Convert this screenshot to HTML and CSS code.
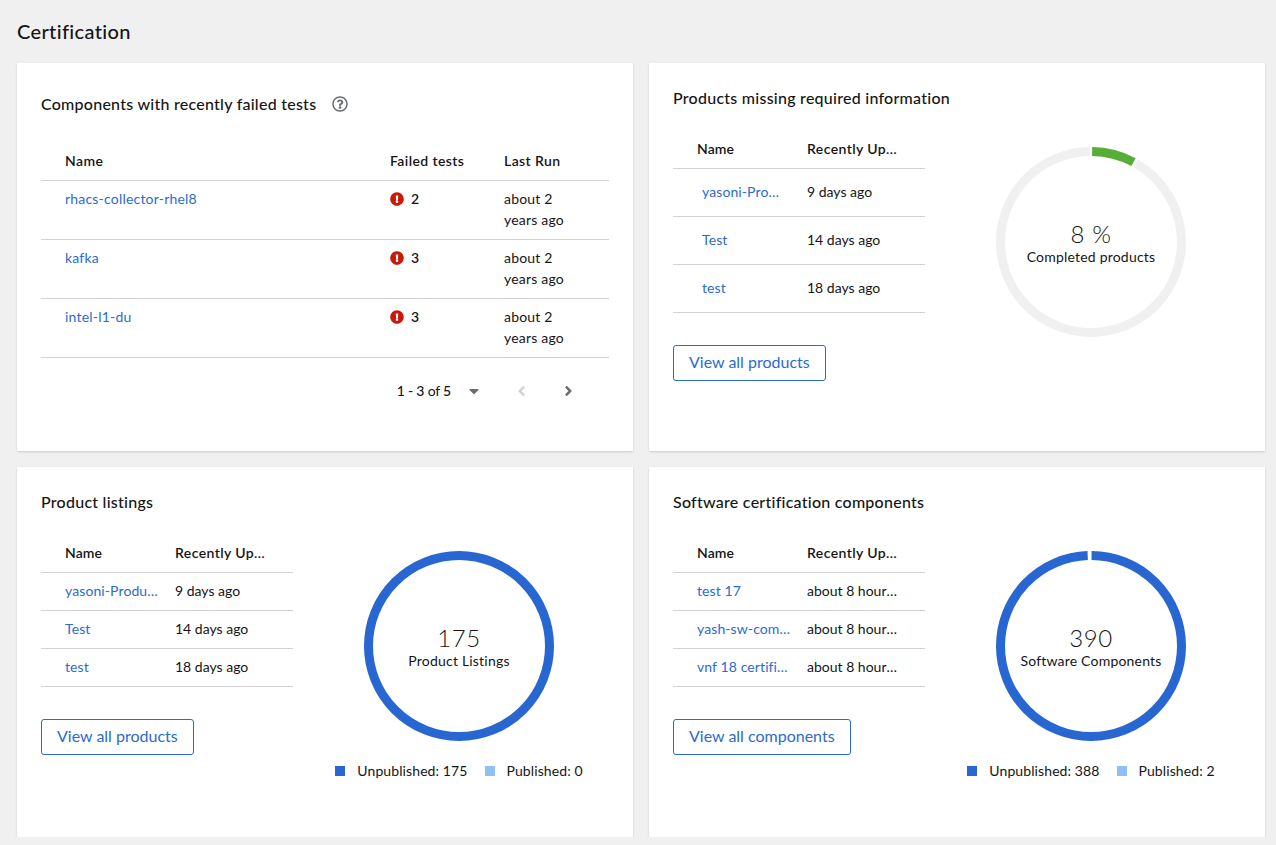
FILE: index.html
```html
<!doctype html>
<html lang="en">
	<head>
		<meta charset="utf-8">
		<title>Certification</title>
		<link rel="stylesheet" href="styles.css">
	</head>
	<body>
	<h1 class="page-title">Certification</h1>
	<div class="grid">

		<!-- failed tests -->
		<section class="card card-tests">
			<div class="card-head">
				<h2>Components with recently failed tests</h2>
				<svg class="help" viewBox="0 0 512 512"><path d="M256 8C119.043 8 8 119.083 8 256c0 136.997 111.043 248 248 248s248-111.003 248-248C504 119.083 392.957 8 256 8zm0 448c-110.532 0-200-89.431-200-200 0-110.495 89.472-200 200-200 110.491 0 200 89.471 200 200 0 110.53-89.431 200-200 200zm107.244-255.2c0 67.052-72.421 68.084-72.421 92.863V300c0 6.627-5.373 12-12 12h-45.647c-6.627 0-12-5.373-12-12v-8.659c0-35.745 27.1-50.034 47.579-61.516 17.561-9.845 28.324-16.541 28.324-29.579 0-17.246-21.999-28.693-39.784-28.693-23.189 0-33.894 10.977-48.942 29.969-4.057 5.12-11.46 6.071-16.666 2.124l-27.824-21.098c-5.107-3.872-6.251-11.066-2.644-16.363C184.846 131.491 214.94 112 261.794 112c49.071 0 101.45 38.304 101.45 88.8zM298 368c0 23.159-18.841 42-42 42s-42-18.841-42-42 18.841-42 42-42 42 18.841 42 42z"/></svg>
			</div>
			<table class="tbl tbl-tests">
				<thead><tr><th class="c-name">Name</th><th class="c-fail">Failed tests</th><th class="c-run">Last Run</th></tr></thead>
				<tbody>
					<tr><td class="c-name"><a href="#">rhacs-collector-rhel8</a></td><td class="c-fail"><svg class="err" viewBox="0 0 512 512"><path d="M504 256c0 136.997-111.043 248-248 248S8 392.997 8 256C8 119.083 119.043 8 256 8s248 111.083 248 248zm-248 50c-25.405 0-46 20.595-46 46s20.595 46 46 46 46-20.595 46-46-20.595-46-46-46zm-43.673-165.346l7.418 136c.347 6.364 5.609 11.346 11.982 11.346h48.546c6.373 0 11.635-4.982 11.982-11.346l7.418-136c.375-6.874-5.098-12.654-11.982-12.654h-63.383c-6.884 0-12.356 5.78-11.981 12.654z"/></svg><b>2</b></td><td class="c-run">about 2 years ago</td></tr>
					<tr><td class="c-name"><a href="#">kafka</a></td><td class="c-fail"><svg class="err" viewBox="0 0 512 512"><path d="M504 256c0 136.997-111.043 248-248 248S8 392.997 8 256C8 119.083 119.043 8 256 8s248 111.083 248 248zm-248 50c-25.405 0-46 20.595-46 46s20.595 46 46 46 46-20.595 46-46-20.595-46-46-46zm-43.673-165.346l7.418 136c.347 6.364 5.609 11.346 11.982 11.346h48.546c6.373 0 11.635-4.982 11.982-11.346l7.418-136c.375-6.874-5.098-12.654-11.982-12.654h-63.383c-6.884 0-12.356 5.78-11.981 12.654z"/></svg><b>3</b></td><td class="c-run">about 2 years ago</td></tr>
					<tr><td class="c-name"><a href="#">intel-l1-du</a></td><td class="c-fail"><svg class="err" viewBox="0 0 512 512"><path d="M504 256c0 136.997-111.043 248-248 248S8 392.997 8 256C8 119.083 119.043 8 256 8s248 111.083 248 248zm-248 50c-25.405 0-46 20.595-46 46s20.595 46 46 46 46-20.595 46-46-20.595-46-46-46zm-43.673-165.346l7.418 136c.347 6.364 5.609 11.346 11.982 11.346h48.546c6.373 0 11.635-4.982 11.982-11.346l7.418-136c.375-6.874-5.098-12.654-11.982-12.654h-63.383c-6.884 0-12.356 5.78-11.981 12.654z"/></svg><b>3</b></td><td class="c-run">about 2 years ago</td></tr>
				</tbody>
			</table>
			<div class="pager">
				<span class="pager-count"><b>1 - 3</b> of <b>5</b></span>
				<svg class="pager-caret" viewBox="0 0 320 512"><path d="M31.3 192h257.3c17.8 0 26.7 21.5 14.1 34.1L174.1 354.8c-7.8 7.8-20.5 7.8-28.3 0L17.2 226.1C4.6 213.5 13.5 192 31.3 192z"/></svg>
				<svg class="pager-arrow off" viewBox="0 0 256 512"><path d="M31.7 239l136-136c9.4-9.4 24.6-9.4 33.9 0l22.6 22.6c9.4 9.4 9.4 24.6 0 33.9L127.9 256l96.4 96.4c9.4 9.4 9.4 24.6 0 33.9L201.7 409c-9.4 9.4-24.6 9.4-33.9 0l-136-136c-9.5-9.4-9.5-24.6-.1-34z"/></svg>
				<svg class="pager-arrow" viewBox="0 0 256 512"><path d="M224.3 273l-136 136c-9.4 9.4-24.6 9.4-33.9 0l-22.6-22.6c-9.4-9.4-9.4-24.6 0-33.9l96.4-96.4-96.4-96.4c-9.4-9.4-9.4-24.6 0-33.9L54.3 103c9.4-9.4 24.6-9.4 33.9 0l136 136c9.5 9.4 9.5 24.6.1 34z"/></svg>
			</div>
		</section>

		<!-- missing info -->
		<section class="card">
			<h2>Products missing required information</h2>
			<div class="split">
				<div class="side">
					<table class="tbl tbl-small tbl-tall">
						<thead><tr><th class="c-a">Name</th><th class="c-b"><span class="cut">Recently Updated</span></th></tr></thead>
						<tbody>
							<tr><td class="c-a"><a class="cut nudge" href="#">yasoni-Product</a></td><td class="c-b"><span class="cut">9 days ago</span></td></tr>
							<tr><td class="c-a"><a class="cut nudge" href="#">Test</a></td><td class="c-b"><span class="cut">14 days ago</span></td></tr>
							<tr><td class="c-a"><a class="cut nudge" href="#">test</a></td><td class="c-b"><span class="cut">18 days ago</span></td></tr>
						</tbody>
					</table>
					<a class="btn" href="#">View all products</a>
				</div>
				<div class="chart">
					<svg class="donut" viewBox="0 0 190 190">
						<circle class="ring ring-grey" cx="95" cy="95" r="90.5" pathLength="100" stroke-dasharray="91.6 8.4" stroke-dashoffset="-8.2"/>
						<circle class="ring ring-green" cx="95" cy="95" r="90.5" pathLength="100" stroke-dasharray="7.6 92.4" stroke-dashoffset="-0.2"/>
						<text class="d-num" x="95" y="96">8 %</text>
						<text class="d-sub" x="95" y="115">Completed products</text>
					</svg>
				</div>
			</div>
		</section>

		<!-- listings -->
		<section class="card">
			<h2>Product listings</h2>
			<div class="split">
				<div class="side">
					<table class="tbl tbl-small">
						<thead><tr><th class="c-a">Name</th><th class="c-b"><span class="cut">Recently Updated</span></th></tr></thead>
						<tbody>
							<tr><td class="c-a"><a class="cut" href="#">yasoni-Product</a></td><td class="c-b"><span class="cut">9 days ago</span></td></tr>
							<tr><td class="c-a"><a class="cut" href="#">Test</a></td><td class="c-b"><span class="cut">14 days ago</span></td></tr>
							<tr><td class="c-a"><a class="cut" href="#">test</a></td><td class="c-b"><span class="cut">18 days ago</span></td></tr>
						</tbody>
					</table>
					<a class="btn" href="#">View all products</a>
				</div>
				<div class="chart">
					<svg class="donut" viewBox="0 0 190 190">
						<circle class="ring ring-blue" cx="95" cy="95" r="90.5"/>
						<text class="d-num" x="95" y="96">175</text>
						<text class="d-sub" x="95" y="115">Product Listings</text>
					</svg>
					<div class="legend">
						<span class="leg"><i class="sq sq-dark"></i>Unpublished: 175</span>
						<span class="leg"><i class="sq sq-light"></i>Published: 0</span>
					</div>
				</div>
			</div>
		</section>

		<!-- software components -->
		<section class="card">
			<h2>Software certification components</h2>
			<div class="split">
				<div class="side">
					<table class="tbl tbl-small">
						<thead><tr><th class="c-a">Name</th><th class="c-b"><span class="cut">Recently Updated</span></th></tr></thead>
						<tbody>
							<tr><td class="c-a"><a class="cut" href="#">test 17</a></td><td class="c-b"><span class="cut">about 8 hours ago</span></td></tr>
							<tr><td class="c-a"><a class="cut" href="#">yash-sw-component</a></td><td class="c-b"><span class="cut">about 8 hours ago</span></td></tr>
							<tr><td class="c-a"><a class="cut" href="#">vnf 18 certification</a></td><td class="c-b"><span class="cut">about 8 hours ago</span></td></tr>
						</tbody>
					</table>
					<a class="btn" href="#">View all components</a>
				</div>
				<div class="chart">
					<svg class="donut" viewBox="0 0 190 190">
						<circle class="ring ring-blue" cx="95" cy="95" r="90.5" pathLength="100" stroke-dasharray="99.3 .7" stroke-dashoffset="-0.1"/>
						<text class="d-num" x="95" y="96">390</text>
						<text class="d-sub" x="95" y="115">Software Components</text>
					</svg>
					<div class="legend">
						<span class="leg"><i class="sq sq-dark"></i>Unpublished: 388</span>
						<span class="leg"><i class="sq sq-light"></i>Published: 2</span>
					</div>
				</div>
			</div>
		</section>

	</div>
	</body>
</html>
```

FILE: styles.css
```css
*{margin: 0;padding: 0;box-sizing: border-box;}
a{text-decoration: none;color: #2b6bd0;}

body{
	background: #f0f0f0;
	color: #151515;
	font-family: "Lato", "Liberation Sans", sans-serif;
	font-size: 14px;
	line-height: 21px;
	letter-spacing: .2px;
	font-variant-ligatures: none;
	padding: 16px 11px 0 17px;
}
.page-title{
	font-size: 20px;
	font-weight: 500;
	line-height: 30px;
	letter-spacing: .35px;
	margin-bottom: 17px;
}
.grid{
	display: grid;
	grid-template-columns: 616px 616px;
	grid-template-rows: 388px 370px;
	gap: 16px;
}
.card{
	background: #fff;
	padding: 24px;
	box-shadow: 0 1px 2px rgba(3,3,3,.16);
}
.card h2{
	font-size: 16px;
	font-weight: 500;
	line-height: 22px;
	letter-spacing: .25px;
}
.card-head{
	display: flex;
	align-items: center;
	height: 34px;
}
.help{
	width: 16px;
	height: 16px;
	margin-left: 16px;
	fill: #6a6e73;
}

/* tables */
.tbl{
	width: 100%;
	table-layout: fixed;
	border-collapse: collapse;
}
.tbl th{
	font-weight: 600;
	text-align: left;
	letter-spacing: .4px;
}
.tbl tr{
	border-bottom: 1px solid #d2d2d2;
}
.tbl td, .tbl th{
	vertical-align: top;
}
.tbl b{
	font-weight: 600;
}
.cut{
	display: block;
	overflow: hidden;
	white-space: nowrap;
	text-overflow: ellipsis;
}
.tbl-tests{
	margin-top: 29px;
}
.tbl-tests th{
	padding: 0 16px 9px 0;
}
.tbl-tests td{
	padding: 7px 16px 8px 0;
	height: 59px;
}
.tbl-tests .c-name{
	padding-left: 24px;
	width: 349px;
}
.tbl-tests .c-fail{
	width: 114px;
}
.tbl-tests .c-run{
	padding-right: 24px;
}
.err{
	width: 14px;
	height: 14px;
	margin-right: 7px;
	fill: #c9190b;
	vertical-align: -2px;
}

.split{
	display: flex;
}
.side{
	flex: none;
	width: 252px;
}
.tbl-small{
	margin-top: 29px;
	margin-bottom: 32px;
}
.tbl-small th{
	padding: 0 28px 9px 0;
}
.tbl-small td{
	padding: 7px 28px 8px 0;
	height: 38px;
	letter-spacing: 0;
}
.tbl-small .c-a{
	padding-left: 24px;
	padding-right: 16px;
	width: 134px;
	letter-spacing: .1px;
}
.tbl-tall td{
	height: 48px;
	padding-top: 12px;
}
.nudge{
	padding: 0 9px 0 5px;
}
.btn{
	display: inline-block;
	height: 36px;
	padding: 4px 15px;
	font-size: 16px;
	line-height: 24px;
	letter-spacing: 0;
	border: 1px solid #2b6bd0;
	border-radius: 3px;
}

/* donuts */
.chart{
	flex: 1;
	padding-left: 16px;
	padding-top: 38px;
	display: flex;
	flex-direction: column;
	align-items: center;
}
.donut{
	flex: none;
	width: 190px;
	height: 190px;
}
.ring{
	fill: none;
	stroke-width: 9;
	transform: rotate(-90deg);
	transform-origin: 95px 95px;
}
.ring-grey{stroke: #f0f0f0;}
.ring-green{stroke: #56ae36;}
.ring-blue{stroke: #2866d1;}
.d-num{
	font-size: 24px;
	font-weight: 300;
	letter-spacing: .6px;
	text-anchor: middle;
	fill: #151515;
}
.d-sub{
	font-size: 14px;
	text-anchor: middle;
	fill: #151515;
}
.legend{
	display: flex;
	gap: 17px;
	margin-top: 19px;
	letter-spacing: .1px;
	white-space: nowrap;
}
.leg{
	display: flex;
	align-items: center;
}
.sq{
	width: 10px;
	height: 10px;
	margin-right: 12px;
}
.sq-dark{background: #2866d1;}
.sq-light{background: #8fbff5;}

/* pagination */
.pager{
	display: flex;
	align-items: center;
	justify-content: flex-end;
	margin-top: 22px;
	height: 21px;
}
.pager-count{margin-right: 18px;letter-spacing: -.2px;}
.pager-count b{font-weight: 500;}
.pager-caret{
	width: 10px;
	height: 16px;
	fill: #6a6e73;
}
.pager-arrow{
	width: 9px;
	height: 16px;
	margin-left: 38px;
	fill: #6a6e73;
}
.pager-arrow:last-child{
	margin-right: 36px;
}
.pager-arrow.off{
	fill: #d2d2d2;
}
```
